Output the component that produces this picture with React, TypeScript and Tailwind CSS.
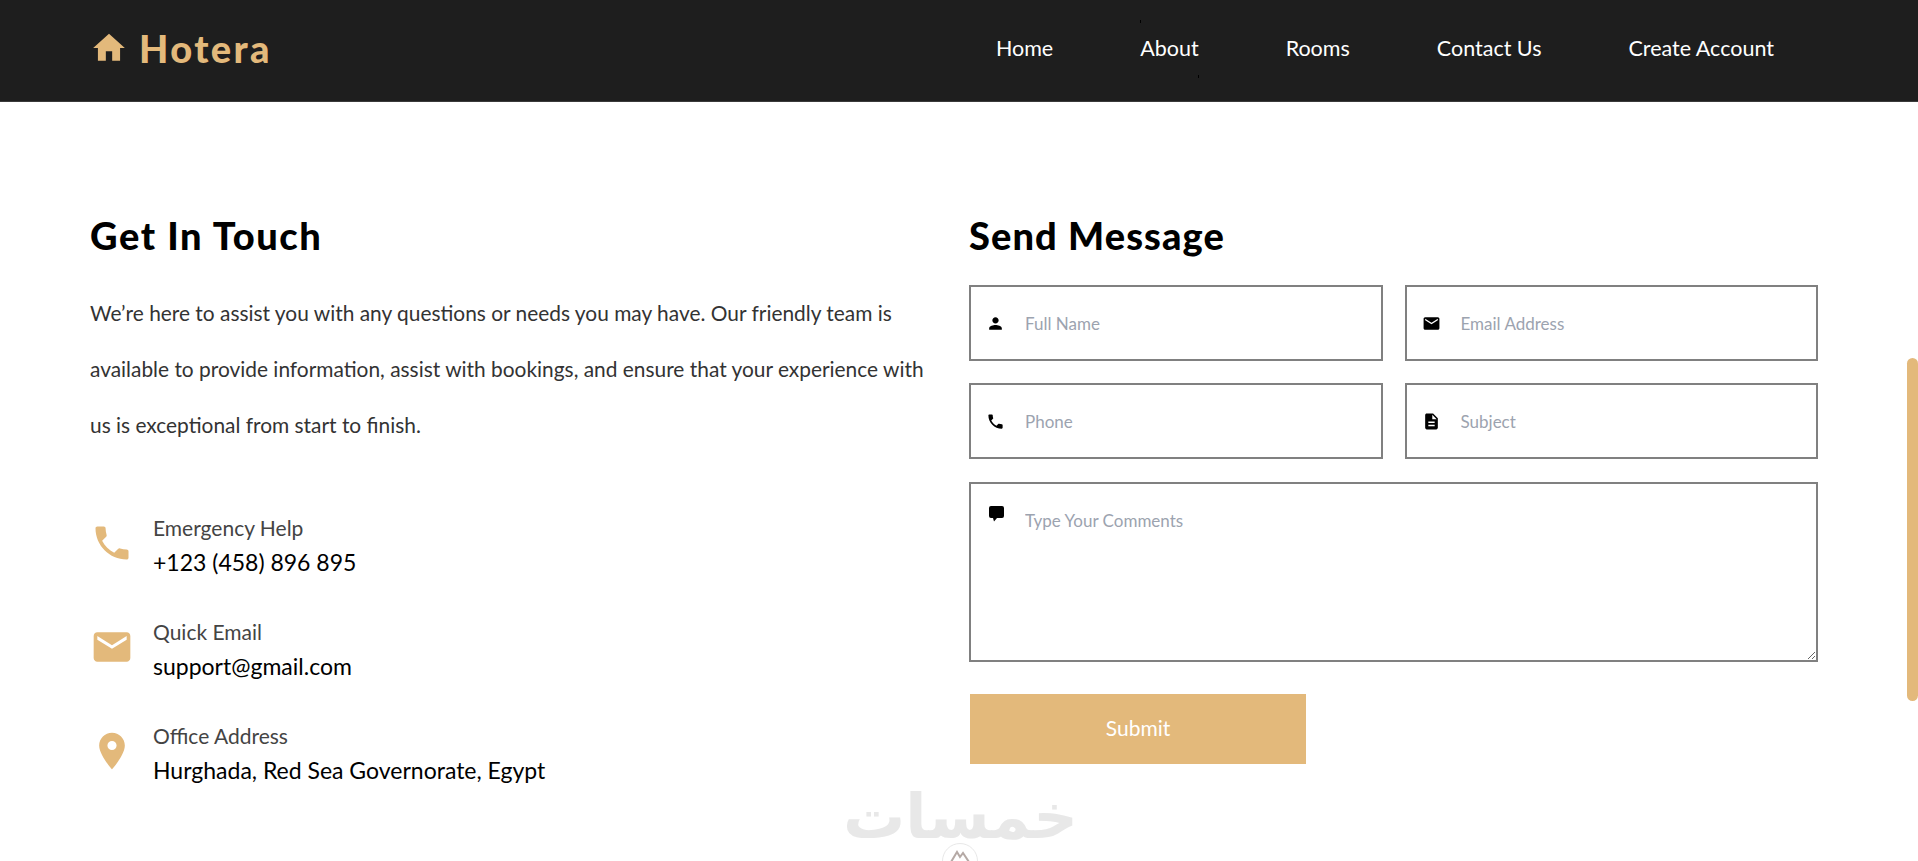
import { ReactNode } from 'react';
import { MdDescription, MdEmail, MdHome, MdLocationOn, MdPerson, MdPhone } from 'react-icons/md';

const links = ['Home', 'About', 'Rooms', 'Contact Us', 'Create Account'];

function Header() {
  return (
    <header className="flex h-[102px] items-center justify-between border-b border-[#3a3a3a] bg-[#1e1e1e] pr-[144px] pb-[6px] pl-[90px]">
      <a className="flex items-center gap-[11px] text-[#e3b97b]">
        <MdHome size={38} />
        <span className="text-[38px] leading-none font-black tracking-[2.4px]">Hotera</span>
      </a>
      <nav className="flex items-center gap-[87px] pt-[2px] text-[21.5px] text-white">
        {links.map((l) => (
          <a key={l} className="relative">
            {l}
            {l === 'About' && (
              <>
                <span className="absolute top-[-12px] left-0 h-[3px] w-px bg-black" />
                <span className="absolute right-0 bottom-[-13px] h-[3px] w-px bg-black" />
              </>
            )}
          </a>
        ))}
      </nav>
    </header>
  );
}

function ContactItem({ icon, title, value }: { icon: ReactNode; title: string; value: string }) {
  return (
    <div className="flex items-center gap-[19px]">
      <span className="mb-[4px] text-[#e3b97b]">{icon}</span>
      <div>
        <p className="text-[21px] leading-[34px] text-[#444]">{title}</p>
        <p className="text-[23px] leading-[34px] text-black">{value}</p>
      </div>
    </div>
  );
}

function Field({ icon, placeholder }: { icon: ReactNode; placeholder: string }) {
  return (
    <label className="flex h-[76px] items-center gap-[20px] border-2 border-[#808080] pl-[15px]">
      {icon}
      <input placeholder={placeholder} className="min-w-0 flex-1 pt-[1px] text-[17px] outline-none placeholder:text-[#9ca3af]" />
    </label>
  );
}

export default function App() {
  return (
    <div className="relative h-[861px] overflow-hidden bg-white [font-family:Lato,sans-serif]">
      <Header />
      <main className="flex pt-[111px] pr-[100px] pl-[90px]">
        <section className="w-[879px] shrink-0">
          <h2 className="text-[38px] leading-[44px] font-black tracking-[1.6px] text-black">Get In Touch</h2>
          <p className="mt-[28px] w-[840px] text-[20.9px] leading-[56px] text-[#333]">
            We’re here to assist you with any questions or needs you may have. Our friendly team is available to provide
            information, assist with bookings, and ensure that your experience with us is exceptional from start to finish.
          </p>
          <div className="mt-[58px] flex flex-col gap-[36px]">
            <ContactItem icon={<MdPhone size={44} />} title="Emergency Help" value="+123 (458) 896 895" />
            <ContactItem icon={<MdEmail size={44} />} title="Quick Email" value="support@gmail.com" />
            <ContactItem icon={<MdLocationOn size={44} />} title="Office Address" value="Hurghada, Red Sea Governorate, Egypt" />
          </div>
        </section>
        <section className="flex-1">
          <h2 className="text-[38px] leading-[44px] font-black tracking-[1.1px] text-black">Send Message</h2>
          <form className="mt-[28px] grid grid-cols-2 gap-[22px]">
            <Field icon={<MdPerson size={19} />} placeholder="Full Name" />
            <Field icon={<MdEmail size={19} />} placeholder="Email Address" />
            <Field icon={<MdPhone size={19} />} placeholder="Phone" />
            <Field icon={<MdDescription size={19} />} placeholder="Subject" />
            <div className="col-span-2 mt-px flex h-[180px] gap-[20px] border-2 border-[#808080] pl-[18px]">
              <svg width="16" height="16" viewBox="0 0 16 16" fill="currentColor" className="mt-[22px] shrink-0">
                <path d="M2 0h11a2 2 0 0 1 2 2v8a2 2 0 0 1-2 2H8l-3 3.5-1-3.5H2a2 2 0 0 1-2-2V2a2 2 0 0 1 2-2z" />
              </svg>
              <textarea
                placeholder="Type Your Comments"
                className="h-full min-w-0 flex-1 pt-[24px] text-[17px] outline-none placeholder:text-[#9ca3af]"
              />
            </div>
            <button type="button" className="mt-[10px] ml-px h-[70px] w-[336px] bg-[#e3b97b] pb-[2px] text-[21px] text-white">
              Submit
            </button>
          </form>
        </section>
      </main>
      <div className="absolute top-[358px] right-0 h-[343px] w-[11px] rounded-[6px] bg-[#e3b97b]" />
      <div className="absolute top-[782px] left-[843px] w-[230px] text-center text-[62px] leading-[70px] font-bold text-[#e8e8e8] [font-family:'DejaVu_Sans',sans-serif]">
        خمسات
      </div>
      <div className="absolute top-[843px] left-[942px] flex h-[36px] w-[36px] justify-center rounded-full border border-[#e8e8e8] bg-white pt-[6px]">
        <svg width="20" height="13" viewBox="0 0 20 13" fill="none" stroke="#b5a9a5" strokeWidth="2">
          <path d="M1 12 7 2l3 5 3-4 6 9" />
        </svg>
      </div>
    </div>
  );
}
